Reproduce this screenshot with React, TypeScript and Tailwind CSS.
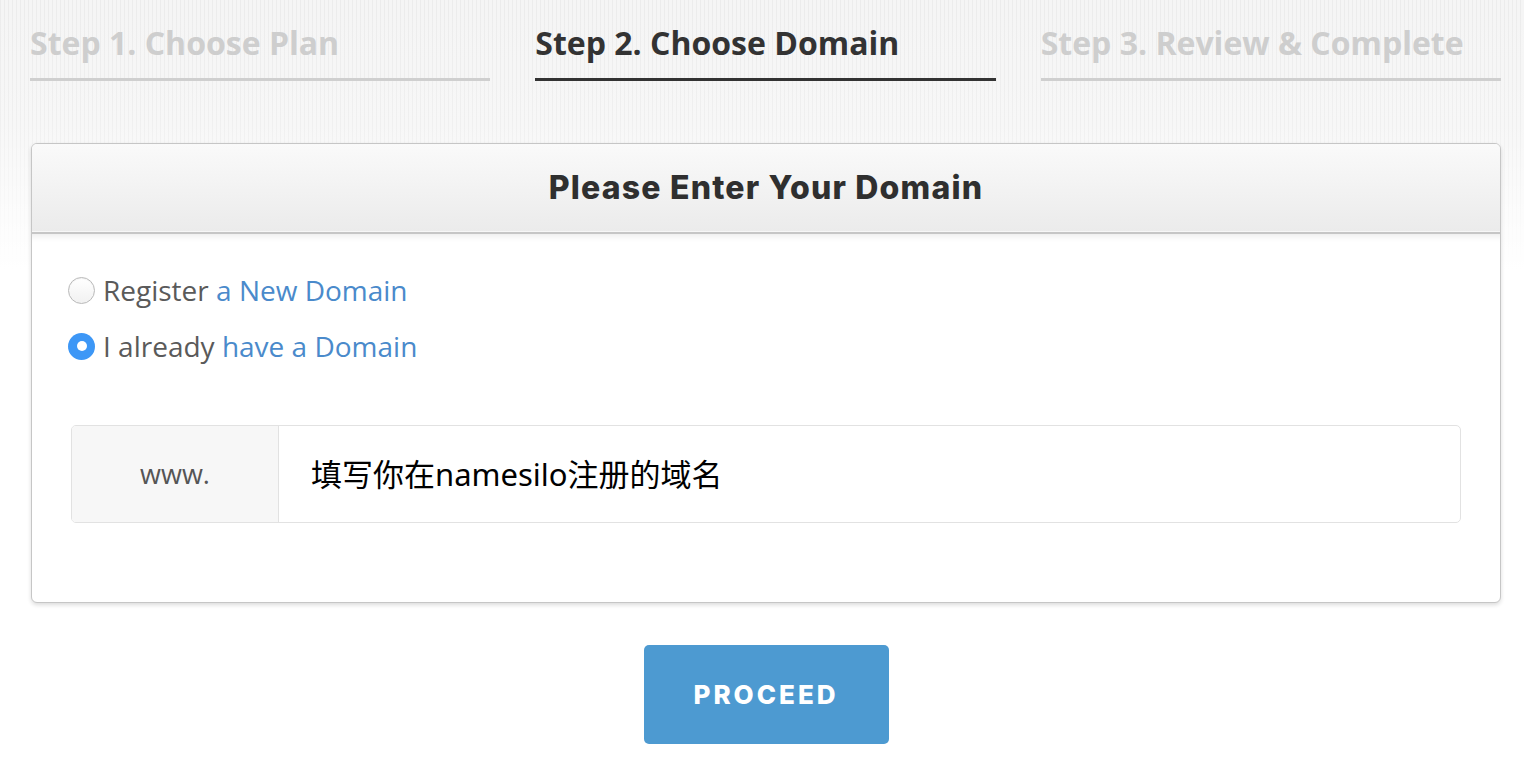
import React from "react";

function Step({ label, active }: { label: string; active?: boolean }) {
  return (
    <div
      className={
        active
          ? "pb-[13px] border-b-[3px] border-[#333333] text-[#333333]"
          : "pb-[13px] border-b-[3px] border-[#cfcfcf] text-[#cecece]"
      }
    >
      <div className="font-['Open_Sans',sans-serif] font-bold text-[32px] leading-[44px] whitespace-nowrap">
        {label}
      </div>
    </div>
  );
}

function Radio({ checked }: { checked?: boolean }) {
  if (checked) {
    return (
      <span className="w-[27px] h-[27px] rounded-full bg-[#3d97f6] flex items-center justify-center shrink-0">
        <span className="w-[10px] h-[10px] rounded-full bg-white" />
      </span>
    );
  }
  return (
    <span className="w-[27px] h-[27px] rounded-full border border-[#b9b9b9] bg-[linear-gradient(to_bottom,#ffffff,#f1f1f1)] shadow-[inset_0_1px_1px_rgba(0,0,0,0.05)] shrink-0" />
  );
}

export default function App() {
  return (
    <div className="min-h-screen bg-white bg-[image:linear-gradient(to_bottom,rgba(255,255,255,0)_0px,rgba(255,255,255,0.2)_120px,#ffffff_270px),repeating-linear-gradient(90deg,#ececec_0px,#ececec_1px,#f5f5f5_1px,#f5f5f5_4px)] pl-[30px] pr-[23px] pt-[21px] pb-[23px]">
      <div className="grid grid-cols-3 gap-[45px]">
        <Step label="Step 1. Choose Plan" />
        <Step label="Step 2. Choose Domain" active />
        <Step label="Step 3. Review & Complete" />
      </div>

      <div className="mt-[62px] ml-[1px] rounded-[6px] border border-[#c6c6c6] bg-white shadow-[0_2px_4px_rgba(0,0,0,0.14)] overflow-hidden">
        <div className="h-[90px] flex items-center justify-center bg-[linear-gradient(to_bottom,#fafafa,#ebebeb)] border-b-2 border-[#c6c6c6] shadow-[inset_0_-1px_0_#f7f7f7]">
          <h1 className="font-['Inter',sans-serif] font-extrabold text-[32px] text-[#2f2f2f] tracking-[1.2px]">
            Please Enter Your Domain
          </h1>
        </div>
        <div className="pt-[28px] pb-[79px] shadow-[inset_0_10px_10px_-10px_rgba(0,0,0,0.12)]">
          <div className="pl-[36px] font-['Open_Sans',sans-serif] text-[28px]">
            <label className="h-[56px] flex items-center gap-[8px]">
              <Radio />
              <span className="text-[#5a5a5a]">
                Register <span className="text-[#4a8acb]">a New Domain</span>
              </span>
            </label>
            <label className="h-[56px] flex items-center gap-[8px]">
              <Radio checked />
              <span className="text-[#5a5a5a]">
                I already <span className="text-[#4a8acb]">have a Domain</span>
              </span>
            </label>
          </div>
          <div className="mx-[39px] mt-[51px] h-[98px] flex rounded-[5px] border border-[#e2e2e2] overflow-hidden">
            <div className="w-[207px] shrink-0 bg-[#f7f7f7] border-r border-[#e2e2e2] flex items-center justify-center font-['Open_Sans',sans-serif] text-[27px] text-[#555555]">
              www.
            </div>
            <div className="flex-1 flex items-center pl-[32px] font-['Noto_Sans','Noto_Sans_CJK_SC',sans-serif] text-[31px] text-black">
              填写你在namesilo注册的域名
            </div>
          </div>
        </div>
      </div>

      <div className="mt-[42px] flex justify-center pl-[1px]">
        <button className="w-[245px] h-[99px] rounded-[5px] bg-[#4d9ad1] text-white font-['Inter',sans-serif] font-extrabold text-[26px] tracking-[3px]">
          PROCEED
        </button>
      </div>
    </div>
  );
}
